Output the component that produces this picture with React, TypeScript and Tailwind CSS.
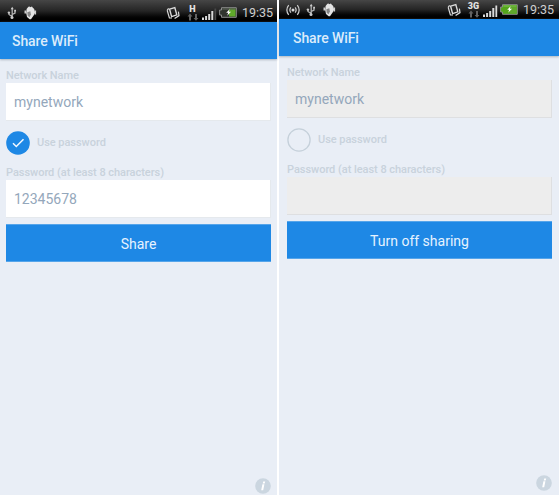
import type { ReactNode } from "react";

function UsbIcon() {
  return (
    <svg className="h-[14px] w-[10px] shrink-0" viewBox="0 0 10 14" fill="none" stroke="#b4b4b4" strokeWidth="1.3">
      <path d="M5.2 12V2M5 10.5L2 8.5V6.5M5.2 8.5L8 7V4.5" />
      <path d="M3.7 3.2L5.2 .8L6.7 3.2Z" fill="#c9c9c9" stroke="none" />
      <circle cx="5" cy="11.6" r="1.5" fill="#c9c9c9" stroke="none" />
      <circle cx="1.9" cy="6.6" r="1.2" fill="#c9c9c9" stroke="none" />
      <path d="M7.2 3.8h1.8v1.8H7.2z" fill="#c9c9c9" stroke="none" />
    </svg>
  );
}

function DebugIcon() {
  return (
    <svg className="h-[14px] w-[13px] shrink-0" viewBox="0 0 13 14">
      <path d="M1.3 4.5v3M11.3 4.5v4" stroke="#cfcfcf" strokeWidth="1.6" fill="none" />
      <path d="M4 1.2L5.2 .2L6 1.2L8 .6L8.6 1.6L10.2 3L11 6.5L9.8 9.3L7 13.2H5.6L3 11L2.2 7L2.6 3Z" fill="#e4e4e4" />
      <path d="M3.3 6.2L6.3 5.2L6.9 8.5L5.5 11.2L3.7 9.7Z" fill="#858585" />
    </svg>
  );
}

function HotspotIcon() {
  return (
    <svg className="h-[12px] w-[14px] shrink-0" viewBox="0 0 14 12" fill="none" stroke="#cfcfcf" strokeWidth="1.2">
      <circle cx="7" cy="6" r="1.5" fill="#ddd" stroke="none" />
      <path d="M4.9 3.3Q2.8 6 4.9 8.7M9.1 3.3Q11.2 6 9.1 8.7M2.7 1.2Q-1 6 2.7 10.8M11.3 1.2Q15 6 11.3 10.8" />
    </svg>
  );
}

function VibrateIcon() {
  return (
    <svg className="h-[14px] w-[14px] shrink-0" viewBox="0 0 14 14" fill="none" stroke="#dadada">
      <path d="M3.6 3.2L8.8 1.6L10.8 8.8L5.6 10.6Z" strokeWidth="1.4" />
      <path d="M1.2 4.4L3.4 12H6M12.4 5.6L13 9.6L8.6 12.6M1.2 4.4L2.6 2.4" strokeWidth="1.2" />
    </svg>
  );
}

function NetworkIcon({ kind }: { kind: string }) {
  return (
    <div className="flex w-[13px] shrink-0 flex-col items-center">
      <span className="h-[8px] font-['Roboto'] text-[9px] leading-[8px] font-black text-[#e2e2e2]">{kind}</span>
      <svg className="h-[8px] w-[12px]" viewBox="0 0 12 8" fill="#626262">
        <path d="M3 .5L5.5 3.5H4V7.5H2V3.5H.5ZM9 7.8L6.5 5H8V1h2v4h1.5Z" />
      </svg>
    </div>
  );
}

function SignalIcon({ full }: { full: boolean }) {
  return (
    <svg className="h-[13px] w-[15px] shrink-0" viewBox="0 0 15 13" fill="#dadada">
      <path d="M0 10.5h2V13H0zM3.1 9h2v4h-2zM6.2 7h2v6h-2zM9.3 4h2v9h-2z" />
      <path d="M12.4 1.5h1.8V13h-1.8z" fill={full ? "#dadada" : "#484848"} />
    </svg>
  );
}

function BatteryIcon({ full }: { full: boolean }) {
  return (
    <svg className="h-[11px] w-[18px] shrink-0" viewBox="0 0 18 11">
      <path d="M2.5 .7H17.3V10.3H2.5V8H.6V3H2.5Z" fill={full ? "#54a51b" : "#30342e"} stroke="#8c8c8c" strokeWidth="1" />
      <path d="M10 1.5h6.5v8H10z" fill="#5fa82a" />
      <path d="M3.3 1.4h13v1.2h-13z" fill={full ? "#79bf4c" : "#5b6257"} />
      <path d="M10.6 2.3L7.2 5.8h2L8.2 8.7L12 4.8H9.9Z" fill="#fff" />
    </svg>
  );
}

function StatusBar({ sharing }: { sharing: boolean }) {
  return (
    <div
      className={
        sharing
          ? "flex h-[19px] shrink-0 items-center bg-linear-to-b from-[#464646] via-[#252525] to-black pr-[4px] pl-[7px]"
          : "flex h-[22px] shrink-0 items-center bg-linear-to-b from-[#464646] via-[#252525] to-black pt-[3px] pr-[3px] pl-[7px]"
      }
    >
      <div className="flex grow items-center">
        {sharing && (
          <div className="mr-[6px] flex">
            <HotspotIcon />
          </div>
        )}
        <UsbIcon />
        <div className="ml-[7px] flex">
          <DebugIcon />
        </div>
      </div>
      <VibrateIcon />
      <div className="ml-[6px] flex">
        <NetworkIcon kind={sharing ? "3G" : "H"} />
      </div>
      <div className="ml-[3px] flex pt-[2px]">
        <SignalIcon full={sharing} />
      </div>
      <div className="ml-[2px] flex">
        <BatteryIcon full={sharing} />
      </div>
      <span className="ml-[5px] w-[32px] text-[12.5px] leading-[14px] whitespace-nowrap text-[#cecece]">19:35</span>
    </div>
  );
}

function Label({ children }: { children: ReactNode }) {
  return <div className="flex h-[16px] items-center text-[11px] leading-none font-medium tracking-[-0.04px] whitespace-nowrap text-[#c8d2dc]">{children}</div>;
}

function Field({ value, disabled }: { value: string; disabled: boolean }) {
  return (
    <div
      className={
        disabled
          ? "flex h-[38px] w-[265px] items-center border-r border-b border-[#dedfe1] bg-[#ededed] px-2 pt-[2px] text-[14px] text-[#94a7bb]"
          : "flex h-[38px] w-[265px] items-center border-r border-b border-[#e5e9ed] bg-white px-2 pt-[2px] text-[14px] text-[#94a7bb]"
      }
    >
      {value}
    </div>
  );
}

function CheckMark({ checked }: { checked: boolean }) {
  return (
    <svg className="h-[24px] w-[24px] shrink-0" viewBox="0 0 24 24" fill="none">
      {checked ? (
        <>
          <circle cx="12" cy="12" r="11.8" fill="#1e88e5" />
          <path d="M7 12.2L10.3 15.5L17.5 8.2" stroke="#f4f9ff" strokeWidth="1.5" />
        </>
      ) : (
        <circle cx="12" cy="12" r="11.1" stroke="#c5d0da" strokeWidth="1.3" />
      )}
    </svg>
  );
}

function InfoIcon() {
  return (
    <svg className="h-[16px] w-[16px]" viewBox="0 0 16 16">
      <circle cx="8" cy="8" r="7.8" fill="#cbd6e0" />
      <path d="M8.2 3.5h2l-.5 2h-2zM7.4 6.2h2L8.2 12.2h-2z" fill="#fff" />
    </svg>
  );
}

function Phone({ sharing, password, action }: { sharing: boolean; password: string; action: string }) {
  return (
    <section className={sharing ? "flex h-[495px] w-[280px] flex-col bg-[#e9eef6] pb-[4px]" : "flex h-[495px] w-[277px] flex-col bg-[#e9eef6] pb-px"}>
      <StatusBar sharing={sharing} />
      <header className="flex h-[37px] shrink-0 items-center bg-[#1e88e5] pt-[2px] pl-[12px] text-[14px] font-medium tracking-[-0.1px] text-[#dcecfb] shadow-[0_1px_2px_#aeb7c0]">
        <div className={sharing ? "ml-[2px]" : ""}>Share WiFi</div>
      </header>
      <main className={sharing ? "flex grow flex-col pt-[8px] pr-[7px] pl-[8px]" : "flex grow flex-col pt-[8px] pr-[6px] pl-[6px]"}>
        <Label>Network Name</Label>
        <Field value="mynetwork" disabled={sharing} />
        <div className="mt-[9px] flex h-[25px] items-center gap-[7px]">
          <CheckMark checked={!sharing} />
          <Label>Use password</Label>
        </div>
        <div className="mt-[9px]">
          <Label>Password (at least 8 characters)</Label>
        </div>
        <Field value={password} disabled={sharing} />
        <button className="mt-[6px] h-[38px] w-[265px] shrink-0 border-y border-[#56a5ea] bg-[#1e88e5] pt-[2px] text-[14px] text-[#e6f3ff]">
          {action}
        </button>
        <div className="mt-auto flex justify-end">
          <InfoIcon />
        </div>
      </main>
    </section>
  );
}

export default function App() {
  return (
    <div className="flex h-[495px] w-[559px] gap-[2px] overflow-hidden bg-white font-['Roboto',sans-serif]">
      <Phone sharing={false} password="12345678" action="Share" />
      <Phone sharing password="" action="Turn off sharing" />
    </div>
  );
}
